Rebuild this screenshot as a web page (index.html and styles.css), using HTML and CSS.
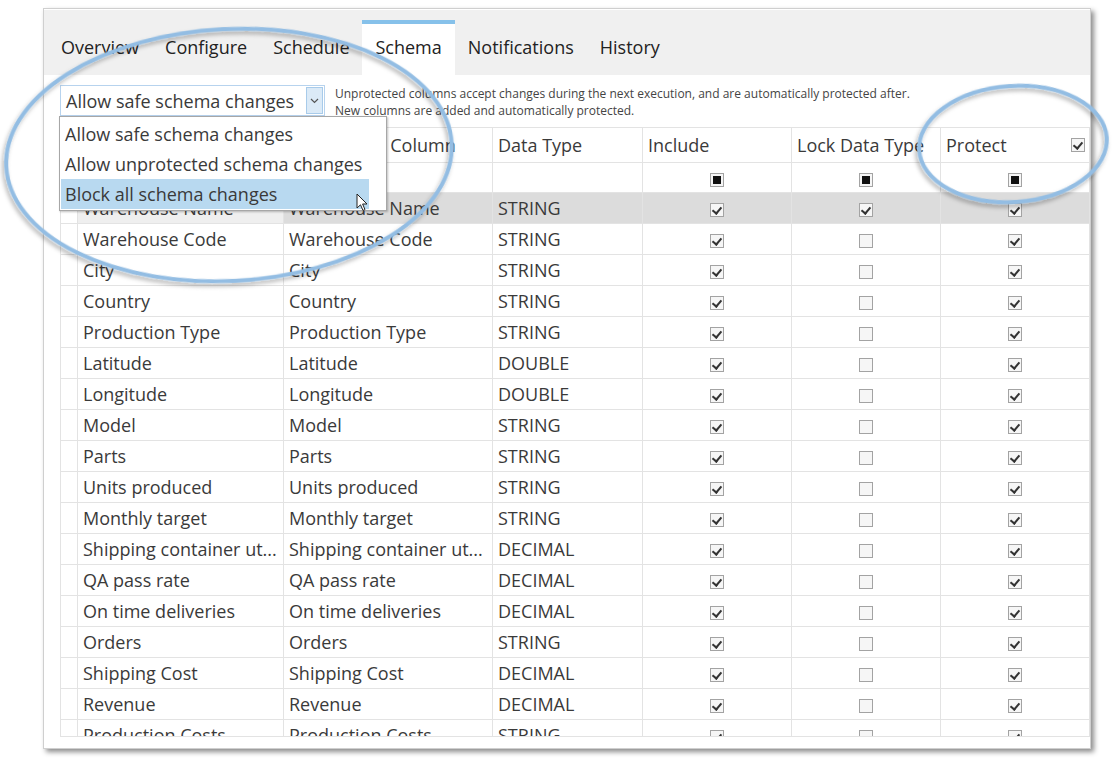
FILE: index.html
```html
<!DOCTYPE html>
<html lang="en">
<head>
    <meta charset="UTF-8">
    <meta name="viewport" content="width=device-width, initial-scale=1.0">
    <title>Schema</title>
    <link rel="stylesheet" href="styles.css">
</head>
<body>
    <div class="frame">
        <div class="tabs">
            <span class="tab">Overview</span>
            <span class="tab">Configure</span>
            <span class="tab">Schedule</span>
            <span class="tab active">Schema</span>
            <span class="tab">Notifications</span>
            <span class="tab">History</span>
        </div>
        <div class="content">
            <div class="toolbar">
                <div class="select">
                    <span>Allow safe schema changes</span>
                    <span class="arrow">
                        <svg width="9" height="6" viewBox="0 0 9 6"><path d="M1 1 L4.5 4.5 L8 1" fill="none" stroke="#555" stroke-width="1.2"/></svg>
                    </span>
                </div>
                <p class="hint">Unprotected columns accept changes during the next execution, and are automatically protected after.<br>New columns are added and automatically protected.</p>
            </div>
            <ul class="menu">
                <li>Allow safe schema changes</li>
                <li>Allow unprotected schema changes</li>
                <li class="hover">Block all schema changes</li>
            </ul>
            <div class="grid">
                <table>
                    <colgroup>
                        <col class="c-head">
                        <col class="c-name">
                        <col class="c-name2">
                        <col class="c-type">
                        <col class="c-check">
                        <col class="c-check">
                        <col class="c-check">
                    </colgroup>
                    <thead>
                        <tr class="head">
                            <th></th>
                            <th>Source Column</th>
                            <th>Destination Column</th>
                            <th>Data Type</th>
                            <th>Include</th>
                            <th>Lock Data Type</th>
                            <th class="protect">Protect <span class="cb on"></span></th>
                        </tr>
                        <tr class="filter">
                            <td></td><td></td><td></td><td></td>
                            <td class="mid"><span class="cb part"></span></td>
                            <td class="mid"><span class="cb part"></span></td>
                            <td class="mid"><span class="cb part"></span></td>
                        </tr>
                    </thead>
                    <tbody id="rows"></tbody>
                </table>
            </div>
        </div>
    </div>

    <svg class="marks" width="1120" height="760" viewBox="0 0 1120 760">
        <defs>
            <filter id="soft" x="-10%" y="-10%" width="120%" height="130%">
                <feDropShadow dx="-2" dy="3" stdDeviation="2" flood-color="#000" flood-opacity="0.3"/>
            </filter>
        </defs>
        <ellipse cx="229" cy="155" rx="223" ry="126" transform="rotate(-3 229 155)" fill="none" stroke="#93bde3" stroke-width="4" filter="url(#soft)"/>
        <ellipse cx="1013" cy="144" rx="94" ry="58" transform="rotate(-4 1013 144)" fill="none" stroke="#93bde3" stroke-width="4" filter="url(#soft)"/>
    </svg>

    <svg class="cursor" width="14" height="20" viewBox="0 0 14 20">
        <path d="M1 1 L1 15 L4.5 11.8 L7 17.5 L9 16.6 L6.6 11 L11 11 Z" fill="#fff" stroke="#222" stroke-width="1"/>
    </svg>

    <script>
        (function(){
            const rows = [
                ['Warehouse Name', 'STRING', 1],
                ['Warehouse Code', 'STRING', 0],
                ['City', 'STRING', 0],
                ['Country', 'STRING', 0],
                ['Production Type', 'STRING', 0],
                ['Latitude', 'DOUBLE', 0],
                ['Longitude', 'DOUBLE', 0],
                ['Model', 'STRING', 0],
                ['Parts', 'STRING', 0],
                ['Units produced', 'STRING', 0],
                ['Monthly target', 'STRING', 0],
                ['Shipping container ut...', 'DECIMAL', 0],
                ['QA pass rate', 'DECIMAL', 0],
                ['On time deliveries', 'DECIMAL', 0],
                ['Orders', 'STRING', 0],
                ['Shipping Cost', 'DECIMAL', 0],
                ['Revenue', 'DECIMAL', 0],
                ['Production Costs', 'STRING', 0]
            ];
            const tbody = document.getElementById('rows');

            rows.forEach((row, index) => {
                const $tr = document.createElement('tr');
                if (index === 0) $tr.classList.add('selected');
                $tr.innerHTML = `
                    <td></td>
                    <td class="first">${row[0]}</td>
                    <td>${row[0]}</td>
                    <td>${row[1]}</td>
                    <td class="mid"><span class="cb on"></span></td>
                    <td class="mid"><span class="cb${row[2] ? ' on' : ''}"></span></td>
                    <td class="mid"><span class="cb on"></span></td>
                `;
                tbody.appendChild($tr);
            });
        })()
    </script>
</body>
</html>
```

FILE: styles.css
```css
* {
    margin: 0;
    padding: 0;
    box-sizing: border-box;
}
body {
    width: 1120px;
    height: 760px;
    position: relative;
    overflow: hidden;
    background: #fff;
    font-family: "Open Sans", "Noto Sans", sans-serif;
    color: #3a3a3a;
}
.frame {
    position: relative;
    margin: 8px 0 0 43px;
    width: 1048px;
    height: 741px;
    background: #fff;
    border: 1px solid #cfcfcf;
    box-shadow: 3px 3px 5px rgba(0, 0, 0, 0.45);
    overflow: hidden;
}
.tabs {
    display: flex;
    align-items: flex-end;
    height: 65px;
    margin-top: 1px;
    padding-left: 4px;
    background: #f0f0f0;
}
.tab {
    height: 55px;
    padding: 5px 13px 0;
    border-top: 4px solid transparent;
    line-height: 36px;
    font-size: 18px;
    color: #222;
}
.tab.active {
    background: #fff;
    border-top-color: #86c1ea;
}
.content {
    position: relative;
    padding: 10px 0 0 16px;
}
.toolbar {
    display: flex;
    align-items: flex-start;
    height: 42px;
}
.select {
    display: flex;
    align-items: center;
    justify-content: space-between;
    width: 265px;
    height: 31px;
    padding: 0 1px 0 5px;
    border: 1px solid #b7d3ee;
    font-size: 18px;
}
.select .arrow {
    display: flex;
    align-items: center;
    justify-content: center;
    width: 17px;
    height: 27px;
    background: #dbeaf7;
    border: 1px solid #a8cbea;
}
.hint {
    margin: 0 0 0 10px;
    font-size: 12px;
    line-height: 17px;
    color: #444;
}
.menu {
    position: absolute;
    top: 41px;
    left: 15px;
    width: 328px;
    padding: 2px 17px 1px 1px;
    list-style: none;
    background: #fff;
    border: 1px solid #a7a7a7;
    box-shadow: 1px 1px 2px rgba(0, 0, 0, 0.25);
    z-index: 2;
}
.menu li {
    height: 30px;
    padding-left: 4px;
    line-height: 30px;
    font-size: 18px;
}
.menu li.hover {
    background: #b8d9f0;
}
.grid {
    height: 610px;
    border-bottom: 1px solid #e3e3e3;
    overflow: hidden;
}
table {
    table-layout: fixed;
    width: 1030px;
    border-collapse: collapse;
    font-size: 18px;
}
col.c-head { width: 17px; }
col.c-name { width: 206px; }
col.c-name2 { width: 209px; }
col.c-type { width: 150px; }
col.c-check { width: 149px; }
th, td {
    border: 1px solid #e3e3e3;
    padding: 0 5px;
    text-align: left;
    font-weight: normal;
    white-space: nowrap;
    overflow: hidden;
}
tr.head th {
    height: 35px;
}
th.protect {
    position: relative;
}
th.protect .cb {
    position: absolute;
    right: 4px;
    top: 10px;
}
tr.filter td {
    height: 30px;
}
tbody td {
    height: 31px;
}
td.mid {
    text-align: center;
}
tr.selected td {
    background: #dcdcdc;
}
tr.selected td:first-child {
    background: #fff;
}
tr.selected td.first {
    background: #efefef;
}
.cb {
    display: inline-block;
    position: relative;
    width: 14px;
    height: 14px;
    vertical-align: middle;
    border: 1px solid #a3a3a3;
    background: #f6f6f6;
}
.cb.on::after {
    content: "";
    position: absolute;
    left: 3px;
    top: 1px;
    width: 4px;
    height: 7px;
    border-right: 2px solid #333;
    border-bottom: 2px solid #333;
    transform: rotate(40deg);
}
.cb.part::after {
    content: "";
    position: absolute;
    left: 2px;
    top: 2px;
    width: 8px;
    height: 8px;
    background: #111;
}
.marks {
    position: absolute;
    top: 0;
    left: 0;
    pointer-events: none;
    z-index: 5;
}
.cursor {
    position: absolute;
    left: 356px;
    top: 193px;
    z-index: 6;
}
```
